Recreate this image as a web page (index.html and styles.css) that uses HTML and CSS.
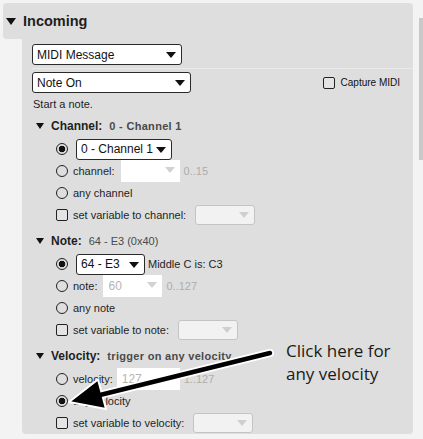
FILE: index.html
```html
<!DOCTYPE html>
<html>
<head>
  <meta charset="UTF-8">
  <title>Incoming</title>
  <link rel="stylesheet" href="styles.css">
</head>
<body>
  <div class="page">
    <div class="panel">
      <div class="panel-head"><span class="caret"></span>Incoming</div>
      <div class="panel-body">
        <div class="msg-row">
          <div class="dropdown msg-select">MIDI Message<span class="arrow"></span></div>
        </div>
        <div class="type-row">
          <div class="dropdown type-select">Note On<span class="arrow"></span></div>
          <div class="capture"><span class="check"></span>Capture MIDI</div>
        </div>
        <p class="hint">Start a note.</p>

        <div class="group">
          <div class="group-head"><span class="caret small"></span><b>Channel:</b><span class="summary bold">0 - Channel 1</span></div>
          <div class="opt"><span class="radio on"></span><div class="dropdown chan-select">0 - Channel 1<span class="arrow"></span></div></div>
          <div class="opt"><span class="radio"></span>channel:<div class="dropdown off chan-input"><span class="arrow"></span></div><span class="range">0..15</span></div>
          <div class="opt"><span class="radio"></span>any channel</div>
          <div class="opt"><span class="check"></span>set variable to channel:<div class="dropdown var var-chan"><span class="arrow"></span></div></div>
        </div>

        <div class="group">
          <div class="group-head"><span class="caret small"></span><b>Note:</b><span class="summary">64 - E3 (0x40)</span></div>
          <div class="opt"><span class="radio on"></span><div class="dropdown note-select">64 - E3<span class="arrow"></span></div><span class="middle">Middle C is: C3</span></div>
          <div class="opt"><span class="radio"></span>note:<div class="dropdown off note-input">60<span class="arrow"></span></div><span class="range">0..127</span></div>
          <div class="opt"><span class="radio"></span>any note</div>
          <div class="opt"><span class="check"></span>set variable to note:<div class="dropdown var var-note"><span class="arrow"></span></div></div>
        </div>

        <div class="group">
          <div class="group-head"><span class="caret small"></span><b>Velocity:</b><span class="summary bold">trigger on any velocity</span></div>
          <div class="opt"><span class="radio"></span>velocity:<div class="dropdown off vel-input">127</div><span class="range">1..127</span></div>
          <div class="opt"><span class="radio on"></span>any velocity</div>
          <div class="opt"><span class="check"></span>set variable to velocity:<div class="dropdown var var-vel"><span class="arrow"></span></div></div>
        </div>
      </div>
    </div>
    <div class="scroll-thumb"></div>

    <svg class="pointer" width="423" height="439" viewBox="0 0 423 439">
      <line x1="270" y1="353" x2="100" y2="395" stroke="#fff" stroke-width="8" stroke-linecap="round"/>
      <polygon points="69,402 98,379.5 106,409" fill="#000" stroke="#fff" stroke-width="2" stroke-linejoin="round"/>
      <line x1="270" y1="353" x2="98" y2="395.5" stroke="#000" stroke-width="4.5" stroke-linecap="round"/>
    </svg>
    <div class="note-text">Click here for<br>any velocity</div>
  </div>
</body>
</html>
```

FILE: styles.css
```css
body {
  margin: 0;
  background-color: #F3F3F3;
  font-family: 'Liberation Sans', Arial, sans-serif;
  color: #1E1E1E;
}

.page {
  position: relative;
  display: flex;
  width: 423px;
  height: 439px;
  overflow: hidden;
}

.panel {
  margin: 3px 0 0 3px;
  width: 410px;
}

.panel-head {
  display: flex;
  align-items: center;
  height: 36px;
  padding-left: 3px;
  background-color: #DEDEDE;
  border-radius: 4px 4px 0 4px;
  font-size: 14.5px;
  font-weight: bold;
}

.caret {
  width: 0;
  height: 0;
  border-left: 5px solid transparent;
  border-right: 5px solid transparent;
  border-top: 7px solid #111;
  margin-right: 7px;
}

.caret.small {
  border-left-width: 4.5px;
  border-right-width: 4.5px;
  border-top-width: 6px;
  margin: 0 7px 0 4px;
}

.panel-body {
  margin-left: 19px;
  height: 395px;
  padding: 5px 0 0 10px;
  box-sizing: border-box;
  background-color: #DEDEDE;
  border-radius: 0 0 4px 4px;
  font-size: 11px;
}

.msg-row {
  padding-bottom: 3px;
  border-bottom: 1px solid #EAEAEA;
}

.type-row {
  display: flex;
  align-items: center;
  justify-content: space-between;
  margin-top: 3px;
  padding-right: 13px;
}

.dropdown {
  position: relative;
  display: flex;
  align-items: center;
  height: 21px;
  padding-left: 4px;
  box-sizing: border-box;
  background-color: #FFFFFF;
  border: 1px solid #2A2A2A;
  border-radius: 3px;
  font-size: 12px;
  color: #111;
}

.dropdown .arrow {
  position: absolute;
  right: 5px;
  top: 7px;
  width: 0;
  height: 0;
  border-left: 5px solid transparent;
  border-right: 5px solid transparent;
  border-top: 6px solid #111;
}

.msg-select { width: 150px; }
.type-select { width: 159px; }
.chan-select { width: 96px; margin-left: 3px; }
.note-select { width: 69px; margin-left: 3px; }

.dropdown.off {
  height: 22px;
  border: none;
  border-radius: 0;
  color: #B4B4B4;
}

.dropdown.off .arrow {
  border-top-color: #D2D2D2;
}

.chan-input { width: 59px; margin-left: 6px; }
.note-input { width: 59px; margin-left: 6px; padding-left: 5px; }
.vel-input { width: 63px; margin-left: 4px; padding-left: 5px; }

.dropdown.var {
  width: 60px;
  height: 20px;
  margin-left: 9px;
  background-color: #F2F2F2;
  border-color: #C4C4C4;
}

.dropdown.var .arrow {
  border-top-color: #CFCFCF;
  top: 6px;
}

.capture {
  display: flex;
  align-items: center;
  font-size: 10px;
  color: #111;
}

.capture .check {
  margin-right: 6px;
}

.check {
  width: 12px;
  height: 12px;
  box-sizing: border-box;
  border: 1px solid #222;
  border-radius: 2px;
  background-color: #E4E4E4;
  margin-right: 5px;
  flex-shrink: 0;
}

.radio {
  width: 12px;
  height: 12px;
  box-sizing: border-box;
  border: 1px solid #222;
  border-radius: 50%;
  margin-right: 5px;
  flex-shrink: 0;
}

.radio.on {
  border-width: 1.5px;
  background: radial-gradient(circle, #111 0 3px, transparent 3.6px);
}

.hint {
  margin: 5px 0 0 1px;
  line-height: 13px;
}

.group {
  margin-top: 6px;
}

.group-head {
  display: flex;
  align-items: center;
  height: 17px;
  margin-bottom: 4px;
  font-size: 12px;
}

.group-head b {
  margin-right: 7px;
}

.summary {
  font-size: 11px;
  color: #4A4A4A;
}

.summary.bold {
  font-weight: bold;
  letter-spacing: 0.3px;
}

.opt {
  display: flex;
  align-items: center;
  height: 22px;
  padding-left: 24px;
}

.range {
  margin-left: 4px;
  color: #ADADAD;
}

.middle {
  margin-left: 3px;
}

.scroll-thumb {
  margin: 18px 0 0 6px;
  width: 4px;
  height: 142px;
  background-color: #C9C9C9;
}

.pointer {
  position: absolute;
  top: 0;
  left: 0;
}

.note-text {
  position: absolute;
  left: 286px;
  top: 339px;
  font-family: 'Open Sans', sans-serif;
  font-size: 17px;
  line-height: 23px;
  color: #1A1A1A;
}
```
